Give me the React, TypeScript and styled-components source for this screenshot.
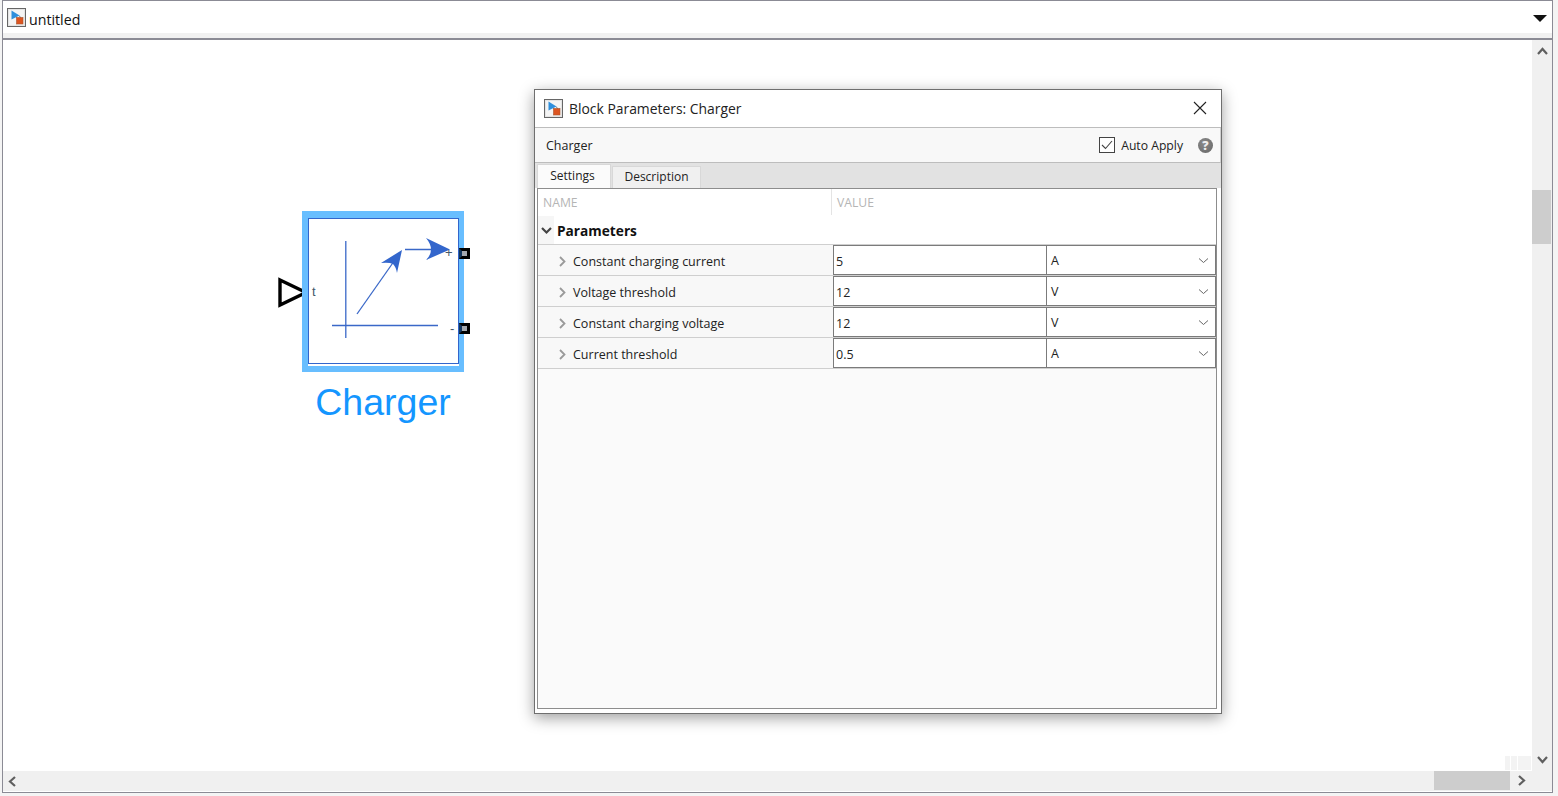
import styled, { createGlobalStyle } from "styled-components";

const Global = createGlobalStyle`
    html, body {
        margin: 0;
        padding: 0;
        background: #f4f4f4;
        overflow: hidden;
    }
    * {
        box-sizing: border-box;
    }
`
const Janela = styled.div`
    width: 1551px;
    height: 793px;
    margin-left: 2px;
    border: 1px solid #8b8b95;
    background: #fff;
    display: flex;
    flex-direction: column;
    font-family: "Open Sans", "Noto Sans", sans-serif;
`
const BarraTitulo = styled.div`
    height: 37px;
    flex: none;
    display: flex;
    align-items: center;
    gap: 3px;
    padding: 0 5px 0 4px;
    border-bottom: 5px solid #f1f1f1;
    font-size: 14.2px;
    color: #111;
`
const NomeModelo = styled.span`
    flex: 1;
    margin-top: 4px;
`
const Seta = styled.div`
    width: 0;
    height: 0;
    margin-top: 2px;
    border-left: 7px solid transparent;
    border-right: 7px solid transparent;
    border-top: 7px solid #111;
`
const Meio = styled.div`
    flex: 1;
    min-height: 0;
    display: flex;
    border-top: 2px solid #8b8b95;
`
const Canvas = styled.div`
    flex: 1;
    position: relative;
`
const BarraVertical = styled.div`
    width: 20px;
    flex: none;
    background: #f0f0f0;
    display: flex;
    flex-direction: column;
    align-items: center;
    justify-content: space-between;
    position: relative;
    padding: 5px 0 5px;
`
const BarraHorizontal = styled.div`
    height: 21px;
    flex: none;
    background: #f0f0f0;
    border-bottom: 1px solid #fff;
    display: flex;
    align-items: center;
    padding: 0 0 0 3px;
    position: relative;
`
const PolegarVertical = styled.div`
    position: absolute;
    top: 150px;
    left: 0;
    width: 19px;
    height: 54px;
    background: #cdcdcd;
`
const PolegarHorizontal = styled.div`
    position: absolute;
    left: 1431px;
    top: 0;
    width: 76px;
    height: 19px;
    background: #cdcdcd;
`
const SetaHorizontalDireita = styled.div`
    position: absolute;
    left: 1512px;
    top: 3px;
    line-height: 0;
`
const MarcaCanto = styled.div`
    position: absolute;
    right: 1px;
    bottom: 1px;
    display: flex;
    gap: 1px;
`
const MarcaQuadro = styled.div<{ $largura: number }>`
    width: ${(p) => p.$largura}px;
    height: 14px;
    background: #f3f3f3;
`
const Bloco = styled.div`
    position: absolute;
    left: 299px;
    top: 171px;
    width: 162px;
    height: 161px;
    border: 6px solid #68beff;
    border-top-width: 7px;
    border-right-width: 5px;
    background: #fff;
`
const BlocoInterno = styled.div`
    position: relative;
    width: 100%;
    height: 146px;
    border: 1px solid #3366cc;
    font-size: 13px;
    color: #44586a;
`
const DesenhoBloco = styled.svg`
    position: absolute;
    left: 0;
    top: 0;
`
const RotuloPorta = styled.span<{ $x: number; $y: number }>`
    position: absolute;
    left: ${(p) => p.$x}px;
    top: ${(p) => p.$y}px;
    font-family: "Liberation Sans", sans-serif;
    line-height: 14px;
`
const Entrada = styled.svg`
    position: absolute;
    left: 274px;
    top: 237px;
`
const Porta = styled.div<{ $y: number }>`
    position: absolute;
    left: 456px;
    top: ${(p) => p.$y}px;
    width: 11px;
    height: 11px;
    border: 3px solid #000;
    border-left-color: #12365f;
    background: #a4a8ae;
`
const NomeBloco = styled.div`
    position: absolute;
    left: 280px;
    top: 339px;
    width: 200px;
    text-align: center;
    font-family: "Liberation Sans", sans-serif;
    font-size: 37.5px;
    line-height: 46px;
    color: #1496ff;
`
const Dialogo = styled.div`
    position: absolute;
    left: 531px;
    top: 49px;
    width: 688px;
    height: 625px;
    background: #fff;
    border: 1px solid #6f6f6f;
    box-shadow: 0 4px 14px rgba(0, 0, 0, .38);
    display: flex;
    flex-direction: column;
    font-size: 12.5px;
    color: #222;
`
const DialogoTitulo = styled.div`
    height: 38px;
    flex: none;
    display: flex;
    align-items: center;
    gap: 6px;
    padding: 0 14px 1px 9px;
    border-bottom: 1px solid #bdbdbd;
    font-size: 13.9px;
`
const DialogoNome = styled.span`
    flex: 1;
`
const BarraFerramentas = styled.div`
    height: 35px;
    flex: none;
    display: flex;
    align-items: center;
    padding: 0 7px 0 11px;
    background: #f8f8f8;
    border-bottom: 1px solid #bdbdbd;
    border-right: 1px solid #d0d0d0;
`
const NomeFerramenta = styled.span`
    flex: 1;
`
const AutoAplicar = styled.label`
    display: flex;
    align-items: center;
    gap: 6px;
    margin-right: 15px;
    font-size: 12.2px;
`
const Caixa = styled.span`
    width: 16px;
    height: 16px;
    border: 1px solid #444;
    background: #fff;
    display: flex;
    align-items: center;
    justify-content: center;
`
const Ajuda = styled.span`
    width: 15px;
    height: 15px;
    border-radius: 50%;
    background: radial-gradient(circle at 40% 35%, #8a8a8a, #666);
    color: #eee;
    font-size: 12.5px;
    font-weight: 800;
    line-height: 15px;
    text-align: center;
`
const Abas = styled.div`
    height: 25px;
    flex: none;
    display: flex;
    align-items: flex-end;
    gap: 1px;
    padding-left: 2px;
    background: #e2e2e2;
    font-size: 12px;
`
const Aba = styled.div<{ $ativa?: boolean }>`
    height: ${(p) => (p.$ativa ? 24 : 22)}px;
    width: ${(p) => (p.$ativa ? 74 : 89)}px;
    padding-right: ${(p) => (p.$ativa ? 3 : 0)}px;
    background: ${(p) => (p.$ativa ? "#fbfbfb" : "#f0f0f0")};
    border: 1px solid #d8d8d8;
    border-bottom: none;
    text-align: center;
    line-height: ${(p) => (p.$ativa ? 21 : 20)}px;
`
const Tabela = styled.div`
    flex: 1;
    margin: 0 4px 4px 2px;
    border: 1px solid #8d8d8d;
    background: #fafafa;
    display: flex;
    flex-direction: column;
`
const Cabecalho = styled.div`
    height: 26px;
    flex: none;
    display: grid;
    grid-template-columns: 293px 1fr;
    background: #fff;
    color: #b5b5b5;
    font-size: 12.2px;
`
const CelulaCabecalho = styled.div<{ $divisor?: boolean }>`
    padding-left: 5px;
    line-height: 28px;
    border-left: ${(p) => (p.$divisor ? "1px solid #e4e4e4" : "none")};
`
const Grupo = styled.div`
    height: 30px;
    flex: none;
    display: flex;
    align-items: center;
    padding-top: 1px;
    background: #fff;
    border-bottom: 1px solid #cfcfcf;
    font-size: 13.7px;
    font-weight: 700;
    color: #111;
`
const GrupoSeta = styled.div`
    width: 16px;
    height: 100%;
    margin-right: 3px;
    background: #f6f6f6;
    display: flex;
    align-items: center;
    justify-content: center;
`
const Linha = styled.div`
    height: 31px;
    flex: none;
    display: grid;
    grid-template-columns: 293px 214px 1fr;
    padding-left: 1px;
    background: #f8f8f8;
    border-bottom: 1px solid #cfcfcf;
`
const NomeLinha = styled.div`
    display: flex;
    align-items: center;
    gap: 4px;
    padding: 2px 0 0 17px;
`
const Campo = styled.div`
    margin-left: 1px;
    height: 30px;
    background: #fff;
    border: 1px solid #7b7b7b;
    border-right-width: 0;
    line-height: 31px;
    padding-left: 2px;
`
const Unidade = styled.div`
    height: 30px;
    background: #fff;
    border: 1px solid #7b7b7b;
    display: flex;
    align-items: center;
    justify-content: space-between;
    padding: 0 5px 0 4px;
    line-height: 31px;
`
const TextoUnidade = styled.span`
    margin-top: 1px;
`

const parametros = [
    { nome: "Constant charging current", valor: "5", unidade: "A" },
    { nome: "Voltage threshold", valor: "12", unidade: "V" },
    { nome: "Constant charging voltage", valor: "12", unidade: "V" },
    { nome: "Current threshold", valor: "0.5", unidade: "A" },
];

function IconeModelo() {
    return (
        <svg width="19" height="19" viewBox="0 0 19 19">
            <rect x=".5" y=".5" width="18" height="18" fill="#e4e4e4" stroke="#666" />
            <rect x="2" y="2" width="15" height="15" fill="#f4f4f4" />
            <path d="M12 7.5 L14 10" stroke="#6b7c8a" strokeWidth="1" />
            <path d="M4.5 2.5 L12.5 7.5 L4.5 11.5 Z" fill="#2f8fdc" />
            <rect x="9.5" y="9.5" width="6.5" height="6.5" fill="#dd5420" stroke="#a8552e" strokeWidth=".6" />
        </svg>
    );
}

function Chevron({ d, cor = "#5f5f5f", largura = 2.2 }: { d: string; cor?: string; largura?: number }) {
    return (
        <svg width="13" height="13" viewBox="0 0 13 13">
            <path d={d} fill="none" stroke={cor} strokeWidth={largura} />
        </svg>
    );
}

export default function App() {
    return (
        <>
            <Global />
            <Janela>
                <BarraTitulo>
                    <IconeModelo />
                    <NomeModelo>untitled</NomeModelo>
                    <Seta />
                </BarraTitulo>
                <Meio>
                    <Canvas>
                        <Entrada width="34" height="34" viewBox="0 0 34 34">
                            <path d="M3 3 L29 15.5 L3 28 Z" fill="#fff" stroke="#000" strokeWidth="3.4" />
                        </Entrada>
                        <Bloco>
                            <BlocoInterno>
                                <DesenhoBloco width="150" height="144" viewBox="0 0 150 144">
                                    <g stroke="#3a68c8" strokeWidth="1.3" fill="none">
                                        <path d="M36.8 22 V119" />
                                        <path d="M23 106.5 H129" />
                                        <path d="M48 95 L88 38" />
                                        <path d="M96 30.5 H130" />
                                    </g>
                                    <g fill="#3366cc">
                                        <path d="M93 31 L72 44 Q80 43 84 45 Q87 48 88 54 Z" />
                                        <path d="M141 30.5 L117 19 Q122 25 122 30.5 Q122 36 117 41 Z" />
                                    </g>
                                </DesenhoBloco>
                                <RotuloPorta $x={3} $y={66}>t</RotuloPorta>
                                <RotuloPorta $x={136} $y={27}>+</RotuloPorta>
                                <RotuloPorta $x={141} $y={103}>-</RotuloPorta>
                            </BlocoInterno>
                        </Bloco>
                        <Porta $y={208} />
                        <Porta $y={283} />
                        <NomeBloco>Charger</NomeBloco>
                        <Dialogo>
                            <DialogoTitulo>
                                <IconeModelo />
                                <DialogoNome>Block Parameters: Charger</DialogoNome>
                                <svg width="14" height="14" viewBox="0 0 14 14">
                                    <path d="M1 1 L13 13 M13 1 L1 13" stroke="#222" strokeWidth="1.1" />
                                </svg>
                            </DialogoTitulo>
                            <BarraFerramentas>
                                <NomeFerramenta>Charger</NomeFerramenta>
                                <AutoAplicar>
                                    <Caixa>
                                        <svg width="12" height="10" viewBox="0 0 12 10">
                                            <path d="M1 5 L4.5 8.5 L11 1" fill="none" stroke="#444" strokeWidth="1.1" />
                                        </svg>
                                    </Caixa>
                                    Auto Apply
                                </AutoAplicar>
                                <Ajuda>?</Ajuda>
                            </BarraFerramentas>
                            <Abas>
                                <Aba $ativa>Settings</Aba>
                                <Aba>Description</Aba>
                            </Abas>
                            <Tabela>
                                <Cabecalho>
                                    <CelulaCabecalho>NAME</CelulaCabecalho>
                                    <CelulaCabecalho $divisor>VALUE</CelulaCabecalho>
                                </Cabecalho>
                                <Grupo>
                                    <GrupoSeta>
                                        <Chevron d="M2 4 L6.5 8.5 L11 4" cor="#444" />
                                    </GrupoSeta>
                                    Parameters
                                </Grupo>
                                {parametros.map((p) => (
                                    <Linha key={p.nome}>
                                        <NomeLinha>
                                            <Chevron d="M4 2 L8.5 6.5 L4 11" cor="#9a9a9a" largura={1.8} />
                                            {p.nome}
                                        </NomeLinha>
                                        <Campo>{p.valor}</Campo>
                                        <Unidade>
                                            <TextoUnidade>{p.unidade}</TextoUnidade>
                                            <Chevron d="M2 4.5 L6.5 8.5 L11 4.5" cor="#666" largura={1} />
                                        </Unidade>
                                    </Linha>
                                ))}
                            </Tabela>
                        </Dialogo>
                        <MarcaCanto>
                            <MarcaQuadro $largura={5} />
                            <MarcaQuadro $largura={6} />
                            <MarcaQuadro $largura={13} />
                        </MarcaCanto>
                    </Canvas>
                    <BarraVertical>
                        <Chevron d="M2 9 L6.5 4 L11 9" />
                        <PolegarVertical />
                        <Chevron d="M2 4 L6.5 9 L11 4" />
                    </BarraVertical>
                </Meio>
                <BarraHorizontal>
                    <Chevron d="M9 2 L4 6.5 L9 11" />
                    <PolegarHorizontal />
                    <SetaHorizontalDireita>
                        <Chevron d="M4 2 L9 6.5 L4 11" />
                    </SetaHorizontalDireita>
                </BarraHorizontal>
            </Janela>
        </>
    );
}
